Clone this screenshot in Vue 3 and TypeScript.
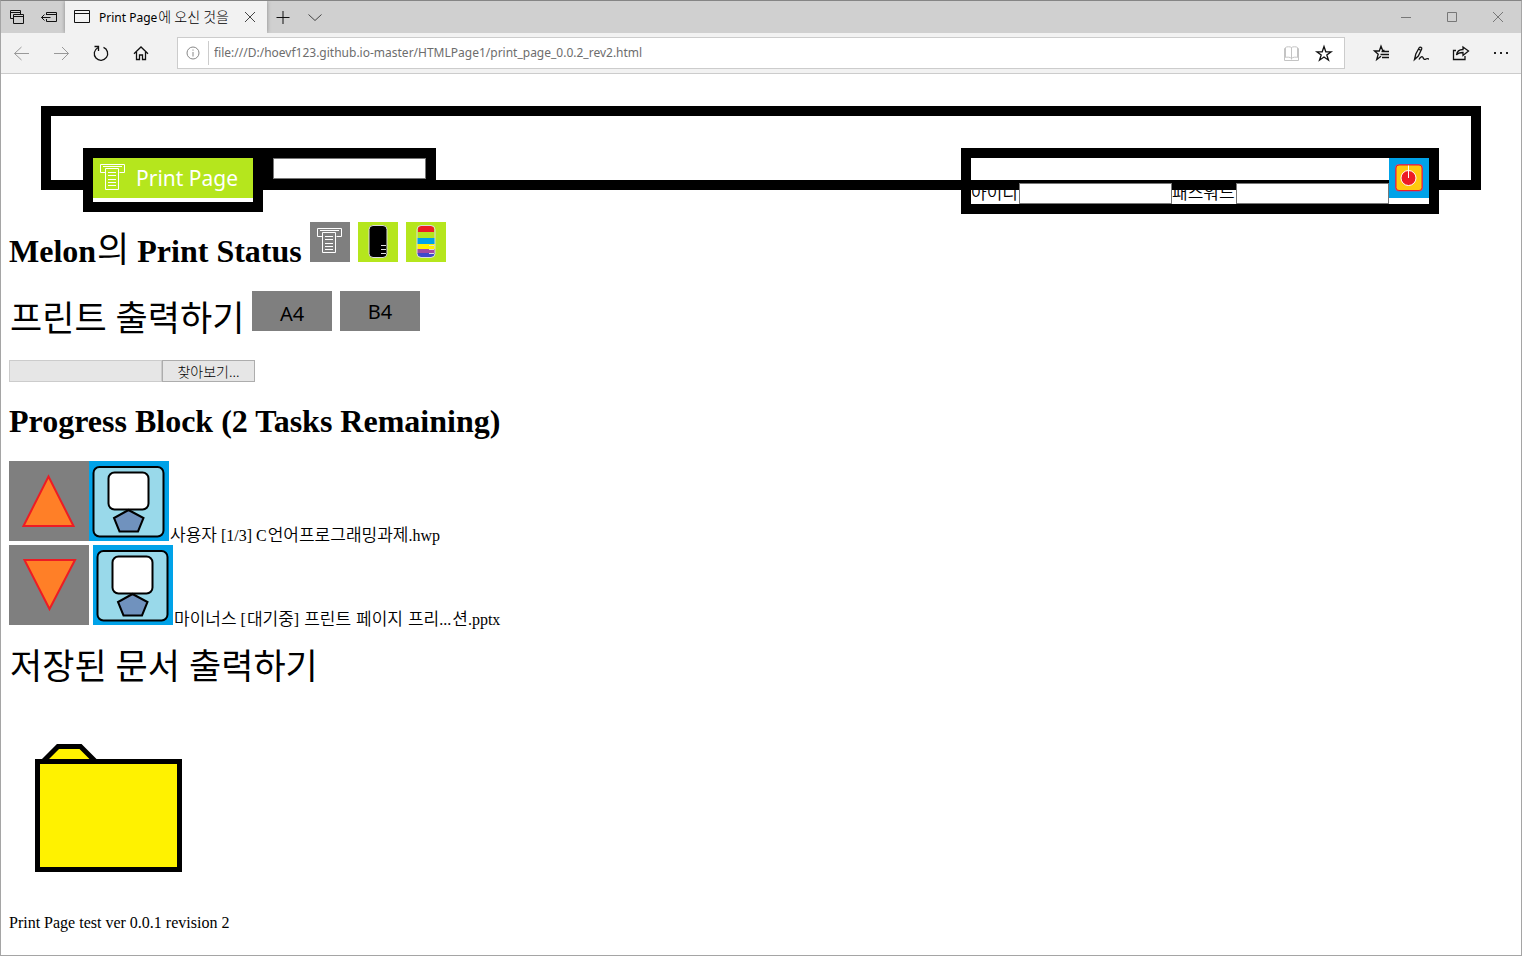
<script setup lang="ts">
import { ref } from 'vue'

interface Job {
  dir: 'up' | 'down'
  points: string
  spaced: boolean
  parts: { text: string; ko: boolean }[]
}

const address = ref('file:///D:/hoevf123.github.io-master/HTMLPage1/print_page_0.0.2_rev2.html')
const search = ref('')
const userId = ref('')
const password = ref('')
const fileName = ref('')
const picker = ref<HTMLInputElement | null>(null)

function onPick(e: Event) {
  const files = (e.target as HTMLInputElement).files
  fileName.value = files && files.length ? files[0].name : ''
}

const jobs: Job[] = [
  {
    dir: 'up',
    points: '39.5,15.5 64.5,65 14.5,65',
    spaced: false,
    parts: [
      { text: '사용자', ko: true },
      { text: ' [1/3] C', ko: false },
      { text: '언어프로그래밍과제', ko: true },
      { text: '.hwp', ko: false },
    ],
  },
  {
    dir: 'down',
    points: '15.5,15 66,15 40.5,64',
    spaced: true,
    parts: [
      { text: '마이너스', ko: true },
      { text: ' [', ko: false },
      { text: '대기중', ko: true },
      { text: '] ', ko: false },
      { text: '프린트', ko: true },
      { text: ' ', ko: false },
      { text: '페이지', ko: true },
      { text: ' ', ko: false },
      { text: '프리', ko: true },
      { text: '...', ko: false },
      { text: '션', ko: true },
      { text: '.pptx', ko: false },
    ],
  },
]
</script>

<template>
  <div class="window">
    <header class="chrome">
      <div class="tabs">
        <button class="tab-tool" aria-label="Tabs you've set aside">
          <svg viewBox="0 0 32 32"><path d="M12.500 17.500h-3v-8h10v4M9.500 11.500h10M12.500 13.500h10v9h-10zM12.500 15.500h10" /></svg>
        </button>
        <button class="tab-tool" aria-label="Set these tabs aside">
          <svg viewBox="0 0 32 32"><path d="M13.500 14v-2.500h10v9h-10V18M13.500 13.500h10M8.500 16.500h9M11.500 13.500l-3 3 3 3" /></svg>
        </button>
        <div class="tab">
          <svg class="tab-icon" viewBox="0 0 16 14"><path d="M.5.5h15v12H.5zM.5 3.500h15" /></svg>
          <span class="tab-title">Print Page<span class="tab-ko">에 오신 것을</span></span>
          <button class="tab-close" aria-label="Close tab">
            <svg viewBox="0 0 12 12"><path d="M1 1l10 10M11 1L1 11" /></svg>
          </button>
        </div>
        <button class="tab-tool" aria-label="New tab">
          <svg viewBox="0 0 32 32"><path d="M9.500 16.500h13M16 10v13" /></svg>
        </button>
        <button class="tab-tool" aria-label="Show tab previews">
          <svg viewBox="0 0 32 32"><path class="mid" d="M9.500 13.500l6.500 6 6.500-6" /></svg>
        </button>
        <div class="win-controls">
          <button aria-label="Minimize"><svg viewBox="0 0 46 32"><path d="M18 16.500h10" /></svg></button>
          <button aria-label="Maximize"><svg viewBox="0 0 46 32"><path d="M18.500 11.500h9v9h-9z" /></svg></button>
          <button aria-label="Close"><svg viewBox="0 0 46 32"><path d="M18 11l10 10M28 11L18 21" /></svg></button>
        </div>
      </div>

      <div class="toolbar">
        <button class="tool off" aria-label="Back">
          <svg viewBox="0 0 40 40"><path d="M28 20.500H13.500M20.500 14l-7 6.500 7 6.500" /></svg>
        </button>
        <button class="tool off" aria-label="Forward">
          <svg viewBox="0 0 40 40"><path d="M13 20.500h14.500M21 14l6.500 6.500L21 27" /></svg>
        </button>
        <button class="tool" aria-label="Refresh">
          <svg viewBox="0 0 40 40"><path class="thick" d="M22.500 14.400a6.700 6.700 0 1 1-5.700.3M13.500 13.500h4V18" /></svg>
        </button>
        <button class="tool" aria-label="Home">
          <svg viewBox="0 0 40 40"><path class="thick" d="M13 20.800L20 14l7 6.800M15.500 19v7.500h3V22h3v4.500h3V19" /></svg>
        </button>
        <div class="address">
          <svg class="info" viewBox="0 0 14 14"><circle cx="7" cy="7" r="6" /><path d="M7 6v4.500M7 3.500v1.200" /></svg>
          <i class="bar"></i>
          <input v-model="address" type="text" aria-label="Address" />
          <button class="addr-btn" aria-label="Reading view">
            <svg viewBox="0 0 32 30"><path class="pale" d="M15.500 9.500v12M15.500 9.500c-1-1-5-1-6 0v10c1-.6 5-.6 6 1 1-1.600 5-1.600 6-1v-10c-1-1-5-1-6 0M9.500 10.500h-1v12h14v-12h-1" /></svg>
          </button>
          <button class="addr-btn" aria-label="Add to favorites">
            <svg viewBox="0 0 32 30"><path class="thick" d="M16 8.500l1.800 5.300h5.300l-4.300 3.200 1.700 5.200L16 19l-4.500 3.200 1.700-5.200-4.300-3.200h5.300z" /></svg>
          </button>
        </div>
        <button class="tool" aria-label="Hub">
          <svg viewBox="0 0 40 40"><path class="thick" d="M23.500 17.500h-1.800L20 13.200l-1.700 4.800h-4.800l3.700 3.200-1.500 5.300 4.300-3.200M20.500 18.500H28M19.500 21.500H28M21 24.500h7" /></svg>
        </button>
        <button class="tool" aria-label="Add notes">
          <svg viewBox="0 0 40 40"><path class="thick" d="M13.500 26.500l1.300-5.500 3.500-6.500c.7-1 3 0 2.400 1.500l-3.400 7-3.800 3.500zM17.500 16l2.500 1.500M18 26.500c1.500-3 3.500-3.500 4-2s1.500 2.500 3 1.500 2.500 0 3 0" /></svg>
        </button>
        <button class="tool" aria-label="Share">
          <svg viewBox="0 0 40 40"><path class="thick" d="M15 17.500h-2.500v9H24v-3.500M15.500 22c.5-4 3-5.500 6.500-5.500v-2.500l5.500 4-5.500 4.500v-3c-3 0-5 .3-6.500 2.500z" /></svg>
        </button>
        <button class="tool" aria-label="Settings and more">
          <svg viewBox="0 0 40 40"><path class="dots" d="M13 19h2v2h-2zM19 19h2v2h-2zM25 19h2v2h-2z" /></svg>
        </button>
      </div>
    </header>

    <main class="page">
      <nav class="banner">
        <a class="box" href="#" aria-label="Print Page">
          <svg class="logo" viewBox="0 0 160 40">
            <rect width="160" height="40" fill="#b5e61d" />
            <path class="printer" d="M12.500 14.500h-5v-8h24v8h-5M10 8.500h19M12.500 10.500h13v21h-13zM15 14.500h8M15 17.500h8M15 21.500h8M15 24.500h8M15 27.500h8" />
            <text class="logo-text" x="43" y="28">Print Page</text>
          </svg>
        </a>
        <div class="box search">
          <input v-model="search" class="field" type="text" aria-label="Search" />
        </div>
        <form class="box login" @submit.prevent>
          <label class="ko id-label" for="uid">아이디</label>
          <input id="uid" v-model="userId" class="field" type="text" />
          <label class="ko pw-label" for="upw">패스워드</label>
          <input id="upw" v-model="password" class="field" type="password" />
          <button class="pic power" aria-label="Login">
            <svg class="s40" viewBox="0 0 40 40">
              <rect width="40" height="40" fill="#00a2e8" />
              <rect x="6.500" y="6.500" width="27" height="26.500" rx="3" fill="#ffc90e" stroke="#a349a4" />
              <rect x="7" y="7" width="26" height="25.500" rx="3" fill="none" stroke="#ed1c24" />
              <circle cx="19.500" cy="20" r="7.500" fill="#ed1c24" stroke="#fff" />
              <path d="M19.500 7.500v12.500" stroke="#fff" />
            </svg>
          </button>
        </form>
      </nav>

      <h1>Melon<span class="ko-big">의</span> Print Status
        <button class="pic" aria-label="Printer">
          <svg class="s40" viewBox="0 0 40 40">
            <rect width="40" height="40" fill="#7f7f7f" />
            <path class="printer" d="M12.500 14.500h-5v-8h24v8h-5M10 8.500h19M12.500 10.500h13v20h-13zM15 14.500h8M15 17.500h8M15 21.500h8M15 24.500h8M15 27.500h8" />
          </svg>
        </button>
        {{ ' ' }}
        <button class="pic" aria-label="Black ink">
          <svg class="s40" viewBox="0 0 40 40">
            <rect width="40" height="40" fill="#b5e61d" />
            <rect x="11" y="3.500" width="18" height="32" rx="4" fill="#000" stroke="#dcdcdc" />
            <path d="M23 23.500h5M23 27.500h5M23 31.500h5" stroke="#dcdcdc" />
          </svg>
        </button>
        {{ ' ' }}
        <button class="pic" aria-label="Color ink">
          <svg class="s40" viewBox="0 0 40 40">
            <rect width="40" height="40" fill="#b5e61d" />
            <path d="M12 10V7q0-3 3-3h10q3 0 3 3v3z" fill="#ed1c24" />
            <path d="M11 16h18v6H11z" fill="#00a2e8" />
            <path d="M11 22h18v5H11z" fill="#fff200" />
            <path d="M11 27h18v4H11z" fill="#a349a4" />
            <path d="M11 31h18q0 4-4 4H15q-4 0-4-4z" fill="#3f48cc" />
            <rect x="11" y="3.500" width="18" height="32" rx="4" fill="none" stroke="#dcdcdc" />
            <path d="M23 23.500h5M23 27.500h5M23 31.500h5" stroke="#dcdcdc" />
          </svg>
        </button>
      </h1>

      <h1><span class="ko-big">프린트</span> <span class="ko-big">출력하기</span>
        {{ ' ' }}
        <button class="pic">
          <svg class="paper" viewBox="0 0 80 40">
            <rect width="80" height="40" fill="#7f7f7f" />
            <text class="paper-text" x="40" y="30">A4</text>
          </svg>
        </button>
        {{ ' ' }}
        <button class="pic">
          <svg class="paper" viewBox="0 0 80 40">
            <rect width="80" height="40" fill="#7f7f7f" />
            <text class="paper-text" x="40" y="28">B4</text>
          </svg>
        </button>
      </h1>

      <div class="file">
        <input class="file-name" type="text" readonly :value="fileName" aria-label="선택한 파일" />
        <button class="file-btn" type="button" @click="picker?.click()">찾아보기...</button>
        <input ref="picker" type="file" hidden @change="onPick" />
      </div>

      <h1>Progress Block (2 Tasks Remaining)</h1>

      <div v-for="job in jobs" :key="job.dir" class="job">
        <button class="pic" :aria-label="job.dir">
          <svg class="s80" viewBox="0 0 80 80">
            <rect width="80" height="80" fill="#7f7f7f" />
            <polygon :points="job.points" fill="#ff7f27" stroke="#ed1c24" stroke-width="2" />
          </svg>
        </button><template v-if="job.spaced">{{ ' ' }}</template><svg class="s80" viewBox="0 0 80 80">
          <rect width="80" height="80" fill="#00a2e8" />
          <rect x="4.500" y="6" width="70" height="69.500" rx="6" fill="#99d9ea" stroke="#000" stroke-width="2" />
          <rect x="19.500" y="11.500" width="40" height="37" rx="6" fill="#fff" stroke="#000" stroke-width="2" />
          <polygon points="39.500,49 54.500,57 49,70.500 30.500,70.500 25,57" fill="#7092be" stroke="#000" stroke-width="2" />
        </svg><span v-for="(p, i) in job.parts" :key="i" class="run" :class="{ ko: p.ko }">{{ p.text }}</span>
      </div>

      <h1><span class="ko-big">저장된</span> <span class="ko-big">문서</span> <span class="ko-big">출력하기</span></h1>

      <button class="pic folder" aria-label="Folder">
        <svg viewBox="0 0 206 206">
          <g fill="#fff200" stroke="#000" stroke-width="5">
            <path d="M34 53.500l15-15h22.500l15 15" />
            <rect x="28.500" y="53.500" width="142" height="108" />
          </g>
        </svg>
      </button>

      <footer>Print Page test ver 0.0.1 revision 2</footer>
    </main>
  </div>
</template>

<style>
body {
  margin: 0;
  background: #fff;
}
</style>

<style scoped>
.window {
  box-sizing: border-box;
  min-height: 100vh;
  border: 1px solid #a5a5a5;
  border-top-color: #858585;
  background: #fff;
  color: #000;
  font: 16px/18px "Liberation Serif", "Noto Sans CJK KR", serif;
}

button {
  padding: 0;
  border: 0;
  background: none;
  color: inherit;
  font: inherit;
}

svg {
  fill: none;
}

.chrome {
  font: 12px/16px "Noto Sans", "Noto Sans CJK KR", sans-serif;
}

.chrome svg {
  display: block;
  stroke: #111;
}

.chrome .mid {
  stroke: #444;
}

.chrome .pale {
  stroke: #c4c4c4;
}

.chrome .thick {
  stroke-width: 1.300;
}

.chrome .dots {
  fill: #222;
  stroke: none;
}

.tabs {
  display: flex;
  height: 32px;
  background: #d0d0d0;
}

.tab-tool {
  width: 32px;
  height: 32px;
}

.tab {
  display: flex;
  align-items: center;
  box-sizing: border-box;
  width: 202px;
  padding: 0 11px 0 9px;
  background: #f2f2f2;
  box-shadow: 0 0 4px #888;
  clip-path: inset(0 -5px);
}

.tab-icon {
  flex: none;
  width: 16px;
  height: 14px;
  margin-right: 9px;
}

.tab-title {
  flex: 1;
  white-space: nowrap;
}

.tab-ko {
  margin-left: 1px;
  font-family: "Noto Sans CJK KR", sans-serif;
  font-size: 14px;
  font-weight: 300;
}

.tab-close {
  flex: none;
  width: 12px;
}

.tab-close svg {
  width: 12px;
  height: 12px;
  stroke: #444;
}

.win-controls {
  display: flex;
  margin-left: auto;
}

.win-controls button {
  width: 46px;
}

.win-controls svg {
  stroke: #777;
}

.toolbar {
  display: flex;
  align-items: center;
  height: 40px;
  border-bottom: 1px solid #ccc;
  background: #f2f2f2;
}

.tool {
  flex: none;
  width: 40px;
  height: 40px;
}

.off svg {
  stroke: #999;
}

.address {
  display: flex;
  flex: 1;
  align-items: center;
  box-sizing: border-box;
  height: 32px;
  margin: 0 16px;
  padding-left: 8px;
  border: 1px solid #ccc;
  background: #fff;
}

.address .info {
  width: 14px;
  height: 14px;
  stroke: #888;
}

.bar {
  width: 1px;
  height: 24px;
  margin: 0 5px 0 8px;
  background: #ccc;
}

.address input {
  flex: 1;
  min-width: 0;
  padding: 0;
  border: 0;
  outline: 0;
  background: none;
  color: #6d6d6d;
  font: inherit;
}

.addr-btn {
  width: 32px;
  height: 30px;
}

.addr-btn:last-child {
  margin-right: 4px;
}

.page {
  padding: 32px 8px 20px;
}

.banner {
  display: flex;
  align-items: flex-start;
  box-sizing: border-box;
  height: 84px;
  margin: 0 32px 32px;
  padding: 32px;
  border: 10px solid #000;
}

.box {
  flex: none;
  border: 10px solid #000;
}

.logo {
  display: block;
  width: 160px;
  height: 40px;
  margin-bottom: 4px;
}

.printer {
  stroke: #fff;
}

.logo-text {
  fill: #fff;
  font: 21px "Noto Sans", sans-serif;
}

.field {
  display: block;
  box-sizing: border-box;
  width: 153px;
  height: 21px;
  padding: 1px 2px;
  border: 1px solid #777;
  border-radius: 0;
  background: #fff;
  font: 13px "Noto Sans CJK KR", sans-serif;
}

.login {
  display: flex;
  align-items: flex-end;
  height: 46px;
  margin-left: auto;
}

.login .id-label {
  width: 48px;
  margin: 0;
  padding-bottom: 3px;
}

.login .pw-label {
  width: 64px;
  margin: 0;
  padding-bottom: 3px;
}

.power {
  align-self: flex-start;
}

.pic {
  display: inline-block;
  vertical-align: baseline;
}

.pic svg {
  display: block;
}

.s40 {
  width: 40px;
  height: 40px;
}

.s80 {
  width: 80px;
  height: 80px;
}

.paper {
  width: 80px;
  height: 40px;
}

.paper-text {
  fill: #000;
  font: 20px "Noto Sans", sans-serif;
  text-anchor: middle;
}

h1 {
  margin: 0 0 21px;
  font-size: 32px;
  font-weight: bold;
  line-height: 37px;
}

h1 .pic {
  font-size: 16px;
  line-height: 18px;
}

.ko-big {
  margin-left: 1px;
  font-family: "Noto Sans CJK KR", sans-serif;
  font-size: 35px;
  font-weight: 400;
  line-height: 27px;
}

.ko {
  margin-left: 1px;
  font-family: "Noto Sans CJK KR", sans-serif;
  font-size: 17px;
  font-weight: 350;
}

.run {
  white-space: pre;
}

.file {
  display: flex;
  height: 22px;
  margin-bottom: 21px;
}

.file-name {
  box-sizing: border-box;
  width: 153px;
  padding: 0 2px;
  border: 1px solid #ccc;
  background: #e6e6e6;
}

.file-btn {
  box-sizing: border-box;
  width: 93px;
  border: 1px solid #adadad;
  background: #e6e6e6;
  font: 14px/18px "Noto Sans CJK KR", sans-serif;
  font-weight: 300;
}

.job {
  height: 84px;
}

.job + h1 {
  margin-top: 21px;
}

.folder {
  display: block;
  width: 206px;
  height: 206px;
}

footer {
  line-height: 18px;
}
</style>
